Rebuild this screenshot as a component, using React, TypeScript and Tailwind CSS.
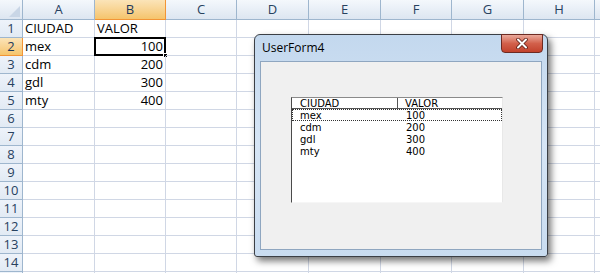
import React from 'react';

const columns = [
  { label: 'A', width: 72 },
  { label: 'B', width: 71 },
  { label: 'C', width: 71 },
  { label: 'D', width: 72 },
  { label: 'E', width: 72 },
  { label: 'F', width: 71 },
  { label: 'G', width: 72 },
  { label: 'H', width: 71 },
  { label: '', width: 80 },
];

const cells: Record<number, [string, string]> = {
  1: ['CIUDAD', 'VALOR'],
  2: ['mex', '100'],
  3: ['cdm', '200'],
  4: ['gdl', '300'],
  5: ['mty', '400'],
};

const items = [
  ['mex', '100'],
  ['cdm', '200'],
  ['gdl', '300'],
  ['mty', '400'],
];

function Sheet() {
  const rows = Array.from({ length: 15 }, (_, i) => i + 1);
  return (
    <div className="flex flex-col">
      <div className="flex h-[20px]">
        <div className="relative w-[23px] shrink-0 border-r border-b border-[#9eb6ce] bg-gradient-to-b from-[#f4f8fc] to-[#dde6f1]">
          <div className="absolute right-[2px] bottom-[2px] h-0 w-0 border-b-[11px] border-l-[11px] border-b-[#c9d6e6] border-l-transparent" />
        </div>
        {columns.map((c, ci) => (
          <div
            key={ci}
            style={{ width: c.width }}
            className={`flex shrink-0 items-center justify-center border-r border-b text-[13px] ${
              c.label === 'B'
                ? 'border-[#f29536] bg-gradient-to-b from-[#fbe4b8] to-[#f5c46b] text-[#1e395b]'
                : 'border-[#9eb6ce] bg-gradient-to-b from-[#f4f8fc] to-[#dde6f1] text-[#27415f]'
            }`}
          >
            {c.label}
          </div>
        ))}
      </div>
      {rows.map((r) => (
        <div key={r} className="flex h-[18px]">
          <div
            className={`flex w-[23px] shrink-0 items-center justify-center border-r border-b text-[13px] ${
              r === 2
                ? 'border-[#f29536] bg-gradient-to-b from-[#fbe4b8] to-[#f5c46b] text-[#1e395b]'
                : 'border-[#9eb6ce] bg-gradient-to-b from-[#eef3fa] to-[#e2eaf4] text-[#27415f]'
            }`}
          >
            {r < 15 ? r : ''}
          </div>
          {columns.map((c, ci) => {
            const v = cells[r]?.[ci];
            const isNum = r > 1 && ci === 1;
            const selected = r === 2 && ci === 1;
            return (
              <div
                key={ci}
                style={{ width: c.width }}
                className={`relative flex shrink-0 items-center border-r border-b border-[#d0d7e5] px-[2px] text-[13px] text-black ${
                  isNum ? 'justify-end' : 'justify-start'
                }`}
              >
                {v}
                {selected && (
                  <>
                    <div className="absolute -left-[1px] -top-[1px] -right-[1px] -bottom-[1px] border-2 border-black" />
                    <div className="absolute -right-[3px] -bottom-[3px] h-[5px] w-[5px] border border-white bg-black" />
                  </>
                )}
              </div>
            );
          })}
        </div>
      ))}
    </div>
  );
}

function UserForm() {
  return (
    <div className="absolute left-[254px] top-[34px] flex h-[223px] w-[294px] flex-col rounded-t-[6px] rounded-b-[3px] border border-[#3b3f45] bg-gradient-to-b from-[#c3d8ee] via-[#d6e5f5] to-[#c9dcf0] shadow-[3px_4px_7px_rgba(0,0,0,0.55)]">
      <div className="relative flex h-[26px] items-center pl-[7px] text-[12px] text-black" style={{ fontFamily: '"Open Sans", "Noto Sans", sans-serif' }}>
        UserForm4
        <div className="absolute right-[4px] -top-[1px] flex h-[19px] w-[42px] items-center justify-center rounded-b-[4px] border border-[#6d2a22] bg-gradient-to-b from-[#e9a99c] via-[#d2604b] to-[#c2422c]">
          <svg width="12" height="11" viewBox="0 0 12 11">
            <path d="M2 1.5 L10 9.5 M10 1.5 L2 9.5" stroke="#5a1c14" strokeWidth="3.6" strokeLinecap="round" />
            <path d="M2 1.5 L10 9.5 M10 1.5 L2 9.5" stroke="#ffffff" strokeWidth="2" strokeLinecap="round" />
          </svg>
        </div>
      </div>
      <div className="mx-[5px] mb-[6px] flex-1 border border-[#8fa6c0] bg-[#f0f0f0] pl-[30px] pt-[35px]">
        <div
          className="flex h-[106px] w-[212px] flex-col border-t border-l border-t-[#8a8a8a] border-l-[#4a4a4a] border-r border-b border-r-[#e8e8e8] border-b-[#f6f6f6] bg-white text-[11px] leading-[12px] text-black"
          style={{ fontFamily: '"DejaVu Sans", sans-serif' }}
        >
          <div className="flex h-[11px] border-b border-[#555]">
            <div className="w-[106px] border-r border-[#555] pl-[8px] text-[10px] leading-[11px]">CIUDAD</div>
            <div className="pl-[7px] text-[10px] leading-[11px]">VALOR</div>
          </div>
          {items.map(([a, b], i) => (
            <div
              key={a}
              className={`flex h-[12px] text-[10px] ${i === 0 ? 'border border-dotted border-[#333]' : 'border border-transparent'}`}
            >
              <div className="w-[106px] pl-[7px]">{a}</div>
              <div className="pl-[7px]">{b}</div>
            </div>
          ))}
        </div>
      </div>
    </div>
  );
}

export default function App() {
  return (
    <div
      className="relative h-[273px] w-[600px] overflow-hidden bg-white"
      style={{ fontFamily: '"Open Sans", "Liberation Sans", sans-serif' }}
    >
      <Sheet />
      <UserForm />
    </div>
  );
}
